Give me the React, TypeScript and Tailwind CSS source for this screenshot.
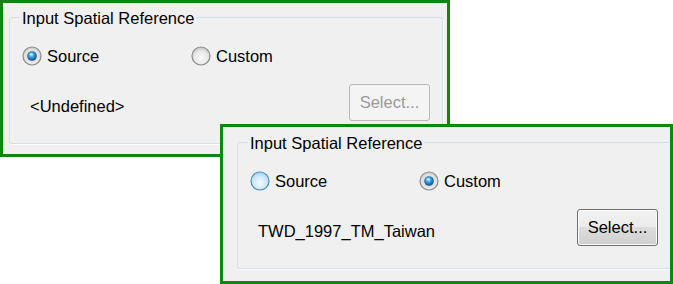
import React from 'react';

const font = { fontFamily: '"Liberation Sans", Arial, sans-serif' };

type RadioKind = 'on' | 'off' | 'hover';

function Radio({ kind }: { kind: RadioKind }) {
  const id = kind;
  return (
    <svg width="20" height="20" viewBox="0 0 20 20" className="shrink-0">
      <defs>
        <radialGradient id={`fill-${id}`} cx="50%" cy="60%" r="60%">
          {kind === 'hover' ? (
            <>
              <stop offset="0%" stopColor="#f4fbff" />
              <stop offset="60%" stopColor="#cfeafb" />
              <stop offset="100%" stopColor="#9fd1f1" />
            </>
          ) : (
            <>
              <stop offset="0%" stopColor="#fbfbfb" />
              <stop offset="60%" stopColor="#e8e8e8" />
              <stop offset="100%" stopColor="#c4c4c4" />
            </>
          )}
        </radialGradient>
        <radialGradient id={`dot-${id}`} cx="45%" cy="40%" r="65%">
          <stop offset="0%" stopColor="#9fe0ff" />
          <stop offset="45%" stopColor="#2d93da" />
          <stop offset="100%" stopColor="#0b3e72" />
        </radialGradient>
      </defs>
      <circle
        cx="10"
        cy="10"
        r="9"
        fill={`url(#fill-${id})`}
        stroke={kind === 'hover' ? '#4f8fc4' : '#8d8d8d'}
        strokeWidth="1.2"
      />
      {kind === 'on' && (
        <>
          <circle cx="10" cy="10" r="7" fill="#e2e2e2" />
          <circle cx="10" cy="10" r="4.8" fill={`url(#dot-${id})`} />
          <ellipse cx="9.2" cy="8.3" rx="1.8" ry="1.2" fill="#ffffff" opacity="0.55" />
        </>
      )}
    </svg>
  );
}

function SelectButton({ disabled }: { disabled?: boolean }) {
  if (disabled) {
    return (
      <div className="w-[81px] h-[37px] rounded-[3px] border border-[#b5babd] bg-[#f4f4f4] flex items-center justify-center text-[#9a9a9a] shrink-0">
        Select...
      </div>
    );
  }
  return (
    <div className="w-[81px] h-[37px] rounded-[3px] border border-[#707070] bg-[linear-gradient(#f2f2f2_0%,#ebebeb_50%,#dddddd_50%,#cfcfcf_100%)] shadow-[inset_0_0_0_1px_#fcfcfc] flex items-center justify-center text-black shrink-0">
      Select...
    </div>
  );
}

interface PanelProps {
  outer: string;
  box: string;
  source: RadioKind;
  custom: RadioKind;
  label: string;
  disabled?: boolean;
}

function Panel({ outer, box, source, custom, label, disabled }: PanelProps) {
  return (
    <div className={`border-[3px] border-[#0f860f] bg-[#f0f0f0] overflow-hidden ${outer}`}>
      <fieldset
        className={`h-[138px] rounded-[3px] border border-[#d5dfe5] shadow-[1px_1px_0_#ffffff] pl-[11px] ${box}`}
      >
        <legend className="ml-[-1px] px-[2px] pt-[2px] leading-[20px]">Input Spatial Reference</legend>
        <div className="flex items-center h-[20px] mt-[18px] leading-[20px]">
          <div className="w-[169px] flex items-center gap-[5px] ml-[1px]">
            <Radio kind={source} />
            <span>Source</span>
          </div>
          <div className="flex items-center gap-[5px]">
            <Radio kind={custom} />
            <span>Custom</span>
          </div>
        </div>
        <div className="flex justify-between items-start mt-[18px]">
          <span className="ml-[9px] mt-[12px] leading-[20px]">{label}</span>
          <SelectButton disabled={disabled} />
        </div>
      </fieldset>
    </div>
  );
}

export default function App() {
  return (
    <div className="w-[673px] h-[284px] bg-white text-[16.5px] text-black overflow-hidden" style={font}>
      <Panel
        outer="w-[450px] h-[157px] pt-[3px] pl-[6px] pr-[4px]"
        box="pr-[12px]"
        source="on"
        custom="off"
        label="<Undefined>"
        disabled
      />
      <div className="relative ml-[220px] -mt-[33px]">
        <Panel
          outer="w-[453px] h-[160px] pt-[4px] pl-[14px]"
          box="w-[460px] pr-[38px]"
          source="hover"
          custom="on"
          label="TWD_1997_TM_Taiwan"
        />
      </div>
    </div>
  );
}
